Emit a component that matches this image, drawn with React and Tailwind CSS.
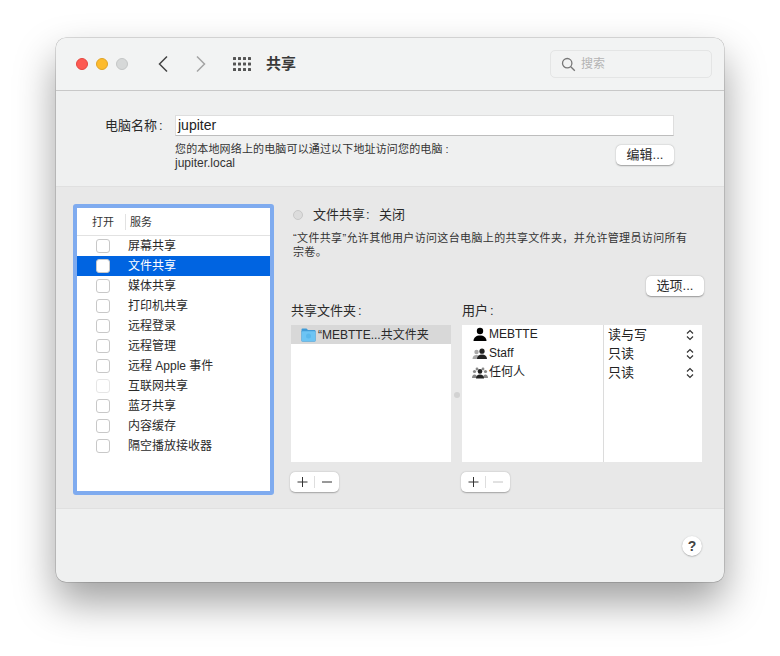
import React from "react";

const services = [
  { name: "屏幕共享" },
  { name: "文件共享", selected: true },
  { name: "媒体共享" },
  { name: "打印机共享" },
  { name: "远程登录" },
  { name: "远程管理" },
  { name: "远程 Apple 事件" },
  { name: "互联网共享", disabled: true },
  { name: "蓝牙共享" },
  { name: "内容缓存" },
  { name: "隔空播放接收器" },
];

function Person() {
  return (
    <svg width="16" height="15" viewBox="0 0 16 15">
      <circle cx="8" cy="4" r="3.2" fill="#000" />
      <path d="M1.5 14c0-3.6 2.8-5.6 6.5-5.6s6.5 2 6.5 5.6z" fill="#000" />
    </svg>
  );
}

function Group() {
  return (
    <svg width="16" height="12" viewBox="0 0 16 12">
      <circle cx="4.5" cy="4" r="2.2" fill="#a8a8a8" />
      <path d="M0.5 11c0-2.6 1.6-4 4-4s4 1.4 4 4z" fill="#a8a8a8" />
      <circle cx="10" cy="3.2" r="2.6" fill="#222" />
      <path d="M5 11c0-3 2-4.6 5-4.6s5 1.6 5 4.6z" fill="#222" />
    </svg>
  );
}

function Everyone() {
  return (
    <svg width="16" height="12" viewBox="0 0 16 12">
      <circle cx="2.5" cy="4.5" r="1.6" fill="#888" />
      <circle cx="13.5" cy="4.5" r="1.6" fill="#888" />
      <circle cx="5" cy="2" r="1.4" fill="#888" />
      <circle cx="11" cy="2" r="1.4" fill="#888" />
      <path d="M0 11c0-2.4 1-3.6 2.6-3.6S5 8.6 5 11z" fill="#888" />
      <path d="M11 11c0-2.4 1-3.6 2.4-3.6S16 8.6 16 11z" fill="#888" />
      <circle cx="8" cy="4.4" r="2.3" fill="#222" />
      <path d="M4 11.5c0-2.8 1.6-4 4-4s4 1.2 4 4z" fill="#222" />
    </svg>
  );
}

function UpDown() {
  return (
    <svg width="8" height="12" viewBox="0 0 8 12" fill="none" stroke="#333" strokeWidth="1.2">
      <path d="M1 4.5 4 1.5l3 3M1 7.5l3 3 3-3" />
    </svg>
  );
}

function PushButton({ children, className }) {
  return (
    <button className={"h-5 w-[58px] rounded-[5px] bg-white text-[13px] text-[#2a2a2a] shadow-[0_0.5px_1.5px_rgba(0,0,0,0.35)] " + className}>
      {children}
    </button>
  );
}

function PlusMinus({ minusOff }) {
  return (
    <div className="flex h-5 w-[49px] items-center rounded-[5px] bg-white shadow-[0_0.5px_1.5px_rgba(0,0,0,0.3)]">
      <svg width="24" height="20" viewBox="0 0 24 20" stroke="#333" strokeWidth="1">
        <path d="M7.5 10h10M12.5 5v10" />
      </svg>
      <div className="h-3 w-px bg-[#dedede]" />
      <svg width="24" height="20" viewBox="0 0 24 20" stroke={minusOff ? "#c4c4c4" : "#333"} strokeWidth="1">
        <path d="M7 10h10" />
      </svg>
    </div>
  );
}

function Row({ icon, name, access }) {
  return (
    <div className="flex h-[19px] items-center">
      <div className="flex w-[141px] items-center pl-[10px]">
        <div className="flex w-[17px] justify-start">{icon}</div>
        <span className="-mt-px text-[12px] text-[#222]">{name}</span>
      </div>
      <div className="flex flex-1 items-center justify-between pl-[5px] pr-[8px]">
        <span className="text-[13px] text-[#222]">{access}</span>
        <UpDown />
      </div>
    </div>
  );
}

export default function App() {
  return (
    <div className="h-[656px] w-[780px] bg-white pl-[56px] pt-[38px] font-['Liberation_Sans','Noto_Sans_CJK_SC',sans-serif]">
      <div className="flex h-[544px] w-[668px] flex-col overflow-hidden rounded-[10px] bg-[#eff0f0] shadow-[0_0_0_0.5px_rgba(0,0,0,0.25),0_20px_40px_rgba(0,0,0,0.38)]">
        {/* toolbar */}
        <div className="flex h-[53px] shrink-0 items-center border-b border-[#c8c8c8] bg-[#f2f3f3] pl-5 pr-3">
          <div className="flex gap-2">
            <div className="h-3 w-3 rounded-full border border-[#e5463f] bg-[#fd5a52]" />
            <div className="h-3 w-3 rounded-full border border-[#e0a325] bg-[#fdbb2d]" />
            <div className="h-3 w-3 rounded-full border border-[#c4c6c6] bg-[#d6d8d8]" />
          </div>
          <svg width="12" height="18" viewBox="0 0 12 18" fill="none" stroke="#444" strokeWidth="1.5" className="ml-[29px]">
            <path d="M10 1.5 2.5 9l7.5 7.5" />
          </svg>
          <svg width="12" height="18" viewBox="0 0 12 18" fill="none" stroke="#a4a4a4" strokeWidth="1.5" className="ml-[26px]">
            <path d="M2 1.5 9.5 9 2 16.5" />
          </svg>
          <svg width="18" height="14" viewBox="0 0 18 14" fill="#555" className="ml-[26px]">
            <rect x="0" y="0" width="3" height="3" rx="0.5" />
            <rect x="5" y="0" width="3" height="3" rx="0.5" />
            <rect x="10" y="0" width="3" height="3" rx="0.5" />
            <rect x="15" y="0" width="3" height="3" rx="0.5" />
            <rect x="0" y="5.5" width="3" height="3" rx="0.5" />
            <rect x="5" y="5.5" width="3" height="3" rx="0.5" />
            <rect x="10" y="5.5" width="3" height="3" rx="0.5" />
            <rect x="15" y="5.5" width="3" height="3" rx="0.5" />
            <rect x="0" y="11" width="3" height="3" rx="0.5" />
            <rect x="5" y="11" width="3" height="3" rx="0.5" />
            <rect x="10" y="11" width="3" height="3" rx="0.5" />
            <rect x="15" y="11" width="3" height="3" rx="0.5" />
          </svg>
          <span className="ml-[15px] text-[15px] font-semibold text-[#3a3a3a]">共享</span>
          <div className="ml-auto flex h-7 w-[162px] items-center rounded-[5px] border border-[#e4e5e5] pl-[10px]">
            <svg width="15" height="15" viewBox="0 0 15 15" fill="none" stroke="#777" strokeWidth="1.3">
              <circle cx="6.2" cy="6.2" r="4.7" />
              <path d="m9.8 9.8 4 4" />
            </svg>
            <span className="ml-[5px] text-[12px] text-[#b4b4b4]">搜索</span>
          </div>
        </div>

        {/* computer name */}
        <div className="h-[95px] shrink-0 pl-[49px] pr-[50px] pt-6">
          <div className="flex items-center">
            <label className="w-[60px] text-[13px] whitespace-nowrap text-[#2a2a2a]">
              电脑名称<span className="ml-[2px]">:</span>
            </label>
            <div className="ml-[10px] flex h-[21px] flex-1 items-center border border-[#dedede] border-b-[#bdbdbd] bg-white pl-[2px] text-[14px] text-[#222]">
              jupiter
            </div>
          </div>
          <div className="ml-[70px] mt-[6px] flex justify-between">
            <div className="text-[#333]">
              <div className="text-[11px] leading-[14px] tracking-[0.15px]">
                您的本地网络上的电脑可以通过以下地址访问您的电脑<span className="ml-[3px]">:</span>
              </div>
              <div className="text-[12px] leading-[15px]">jupiter.local</div>
            </div>
            <PushButton className="mt-[3px]">编辑...</PushButton>
          </div>
        </div>

        {/* service panel */}
        <div className="flex h-[323px] shrink-0 border-y border-[#e0e0e0] bg-[#e8e8e8] pl-[17px] pt-[17px]">
          <div className="h-[291px] w-[201px] rounded-[3px] border-4 border-[#7fabef] bg-white">
            <div className="flex h-[28px] items-center border-b border-[#e2e2e2] pt-px text-[11px] text-[#333]">
              <span className="ml-[15px] w-[33px]">打开</span>
              <div className="h-4 w-px bg-[#e2e2e2]" />
              <span className="ml-[4px]">服务</span>
            </div>
            {services.map((s) => (
              <div
                key={s.name}
                className={
                  "flex h-5 items-center pl-[19px] text-[12px] " +
                  (s.selected ? "bg-[#0064e1] text-white" : "text-[#2a2a2a]")
                }
              >
                <div
                  className={
                    "h-[14px] w-[14px] rounded-[3px] border bg-white " +
                    (s.disabled ? "border-[#e6e6e6]" : "border-[#c8c8c8]")
                  }
                />
                <span className="-mt-px ml-[18px]">{s.name}</span>
              </div>
            ))}
          </div>

          <div className="ml-[17px] flex w-[414px] flex-col">
            <div className="flex h-[22px] items-center pl-[2px]">
              <div className="h-[10px] w-[10px] rounded-full border border-[#c8c8c8] bg-[#dcdcdc]" />
              <span className="ml-[10px] text-[13px] text-[#2a2a2a]">
                文件共享<span className="inline-block w-[14px] pl-px">:</span>关闭
              </span>
            </div>
            <p className="mt-[5px] w-[398px] pl-[2px] text-[11px] leading-[14px] tracking-[0.36px] text-[#333]">
              {"“文件共享”允许其他用户访问这台电脑上的共享文件夹\uFF0C并允许管理员访问所有宗卷。"}
            </p>
            <div className="mt-[17px] flex justify-end pr-px">
              <PushButton>选项...</PushButton>
            </div>

            <div className="flex">
              <div className="w-[160px]">
                <div className="flex h-[29px] items-center text-[13px] text-[#2a2a2a]">
                  共享文件夹<span className="ml-[2px]">:</span>
                </div>
                <div className="h-[137px] bg-white">
                  <div className="flex h-[19px] items-center bg-[#d8d8d8] pl-[10px]">
                    <svg width="15" height="14" viewBox="0 0 15 14">
                      <path d="M0.5 3V1.5A1 1 0 0 1 1.5 0.5h4l1.5 1.5h6.5a1 1 0 0 1 1 1V4H0.5z" fill="#3f9bd8" />
                      <rect x="0.5" y="3" width="14" height="10.5" rx="1" fill="#6cc4f4" stroke="#4a9fd4" strokeWidth="0.5" />
                      <circle cx="7.5" cy="8" r="2.5" fill="#5ab8ec" />
                    </svg>
                    <span className="ml-[2px] text-[12px] whitespace-nowrap text-[#2a2a2a]">“MEBTTE...共文件夹</span>
                  </div>
                </div>
                <div className="-ml-px mt-[10px]">
                  <PlusMinus />
                </div>
              </div>

              <div className="flex w-[11px] items-center justify-center pt-[29px] pb-[30px]">
                <div className="mt-[2px] h-[6px] w-[6px] rounded-full bg-[#d2d2d2]" />
              </div>

              <div className="w-[240px]">
                <div className="flex h-[29px] items-center text-[13px] text-[#2a2a2a]">
                  用户<span className="ml-[2px]">:</span>
                </div>
                <div className="relative h-[137px] bg-white">
                  <div className="absolute inset-y-0 left-[141px] w-px bg-[#dcdcdc]" />
                  <Row icon={<Person />} name="MEBTTE" access="读与写" />
                  <Row icon={<Group />} name="Staff" access="只读" />
                  <Row icon={<Everyone />} name="任何人" access="只读" />
                </div>
                <div className="-ml-px mt-[10px]">
                  <PlusMinus minusOff />
                </div>
              </div>
            </div>
          </div>
        </div>

        {/* footer */}
        <div className="flex flex-1 items-start justify-end pr-[22px] pt-[27px]">
          <button className="flex h-5 w-5 items-center justify-center rounded-full bg-white text-[14px] font-bold text-[#444] shadow-[0_0.5px_1.5px_rgba(0,0,0,0.35)]">
            ?
          </button>
        </div>
      </div>
    </div>
  );
}
